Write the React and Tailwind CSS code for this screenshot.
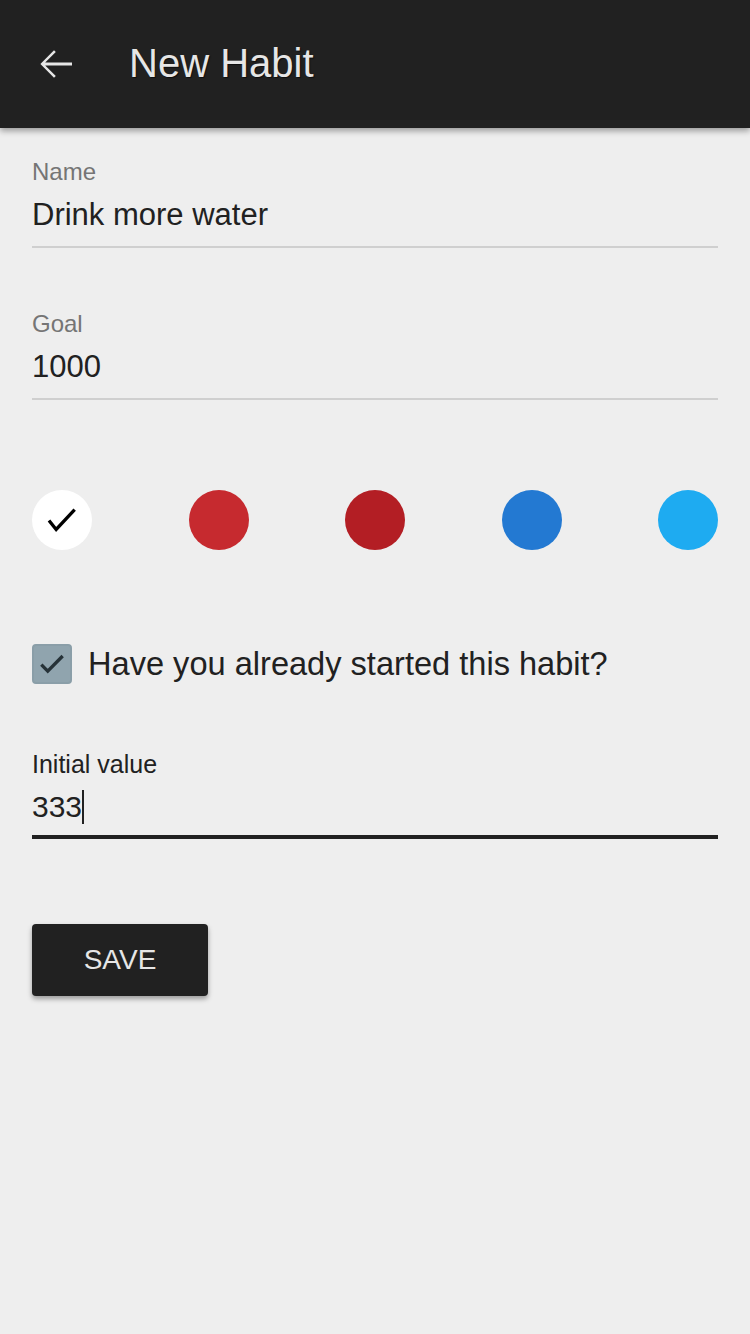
import React, { useState } from "react";

const COLORS = ["#ffffff", "#c62a2f", "#b31e24", "#2379d2", "#1eabf1"];

function ArrowBack() {
  return (
    <svg width="48" height="48" viewBox="0 0 24 24" fill="#e6e6e6">
      <path d="M20 11.3H6.6l5.3-5.3-.9-.9L4.2 12l6.8 6.9.9-.9-5.3-5.3H20z" />
    </svg>
  );
}

function Field({ label, value }) {
  return (
    <div className="border-b-2 border-[#cfcfcf] pb-[11px]">
      <div className="text-[24px] leading-[28px] text-[#757575]">{label}</div>
      <div className="mt-[9px] text-[31px] leading-[40px] text-[#212121]">{value}</div>
    </div>
  );
}

export default function App() {
  const [color, setColor] = useState(0);
  const [started, setStarted] = useState(true);

  return (
    <div
      className="min-h-[1334px] w-[750px] bg-[#eeeeee]"
      style={{ fontFamily: '"Liberation Sans", Arial, sans-serif' }}
    >
      {/* Top bar */}
      <header className="h-[128px] bg-[#212121] shadow-[0_3px_6px_rgba(0,0,0,0.35)] flex items-center pl-[32px]">
        <ArrowBack />
        <h1 className="ml-[49px] -mt-[3px] text-[40px] text-[#e6e6e6] [text-shadow:1px_1px_1px_rgba(0,0,0,0.6)]">
          New Habit
        </h1>
      </header>

      <main className="px-[32px] pt-[30px]">
        <Field label="Name" value="Drink more water" />
        <div className="mt-[62px]">
          <Field label="Goal" value="1000" />
        </div>

        {/* Colour picker */}
        <div className="mt-[90px] flex justify-between">
          {COLORS.map((c, i) => (
            <button
              key={c}
              onClick={() => setColor(i)}
              className="w-[60px] h-[60px] rounded-full flex items-center justify-center"
              style={{ backgroundColor: c }}
            >
              {color === i && (
                <svg width="40" height="40" viewBox="0 0 24 24" fill="none" stroke="#000" strokeWidth="2">
                  <path d="M4.2 12.3l4.3 5.4L19.6 5.8" />
                </svg>
              )}
            </button>
          ))}
        </div>

        {/* Checkbox */}
        <label className="mt-[94px] flex items-center">
          <span
            onClick={() => setStarted(!started)}
            className="w-[40px] h-[40px] rounded-[4px] bg-[#90a4ae] border-2 border-[#8a9ea8] flex items-center justify-center"
          >
            {started && (
              <svg width="32" height="32" viewBox="0 0 24 24" fill="none" stroke="#263238" strokeWidth="2.5">
                <path d="M4 12.5l4.8 4.8L20 6" />
              </svg>
            )}
          </span>
          <span className="ml-[16px] text-[32.6px] leading-[40px] text-[#212121]">
            Have you already started this habit?
          </span>
        </label>

        {/* Initial value */}
        <div className="mt-[66px] border-b-4 border-[#212121] pb-[8px]">
          <div className="text-[25px] leading-[28px] text-[#212121]">Initial value</div>
          <div className="mt-[9px] text-[30px] leading-[40px] text-[#212121] flex items-center">
            333
            <span className="inline-block w-[2px] h-[34px] bg-[#212121]" />
          </div>
        </div>

        <button className="mt-[85px] w-[176px] h-[72px] rounded-[4px] bg-[#212121] text-[#e6e6e6] text-[28px] shadow-[0_3px_5px_rgba(0,0,0,0.35)]">
          SAVE
        </button>
      </main>
    </div>
  );
}
